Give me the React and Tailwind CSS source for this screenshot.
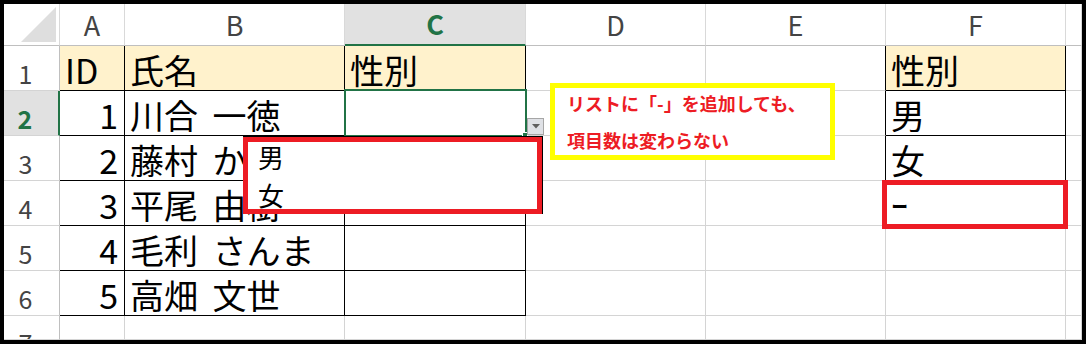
import React from "react";

const cols = ["A", "B", "C", "D", "E", "F", ""];

const rows = [
  ["ID", "氏名", "性別", "", "", "性別", ""],
  ["1", "川合 一徳", "", "", "", "男", ""],
  ["2", "藤村 かおり", "", "", "", "女", ""],
  ["3", "平尾 由樹", "", "", "", "ｰ", ""],
  ["4", "毛利 さんま", "", "", "", "", ""],
  ["5", "高畑 文世", "", "", "", "", ""],
  ["", "", "", "", "", "", ""],
];

const jp = "font-['Noto_Sans_CJK_JP','Noto_Sans',sans-serif]";

function inTable(r, c) {
  return r >= 1 && r <= 6 && c <= 2;
}

function Cell({ r, c, value }) {
  const table = inTable(r, c);
  const fTable = c === 5 && r >= 1 && r <= 3;
  const rightBlack = table || fTable || (c === 4 && r >= 1 && r <= 3);
  const bottomBlack = table || fTable;
  const gold = r === 1 && (c <= 2 || c === 5);
  const numeric = c === 0 && r >= 2;

  return (
    <div
      className={`flex whitespace-nowrap border-r border-b ${
        rightBlack ? "border-r-black" : "border-r-[#d4d4d4]"
      } ${bottomBlack ? "border-b-black" : "border-b-[#d4d4d4]"} ${
        gold ? "bg-[#fff2cc]" : "bg-white"
      } ${numeric ? "justify-end pr-[6px]" : "justify-start pl-[5px]"} items-end`}
    >
      {value && (
        <span className="text-[34px] leading-[40px] text-black [word-spacing:7px]">{value}</span>
      )}
    </div>
  );
}

function CornerCell() {
  return (
    <div className="flex items-end justify-end border-r border-b border-r-[#d9d9d9] border-b-[#bfbfbf] bg-white pr-[2px] pb-[2px]">
      <svg width="36" height="36" viewBox="0 0 36 36">
        <polygon points="35,0 35,35 0,35" fill="#dedede" />
      </svg>
    </div>
  );
}

function ColHeader({ label, active }) {
  return (
    <div
      className={`flex items-center justify-center border-r border-r-[#d9d9d9] ${
        active
          ? "border-b-2 border-b-[#217346] bg-[#e1e1e1] font-bold text-[#217346]"
          : "border-b border-b-[#bfbfbf] bg-white text-[#444444]"
      }`}
    >
      <span className="text-[27px] leading-[32px]">{label}</span>
    </div>
  );
}

function RowHeader({ n, active }) {
  return (
    <div
      className={`flex justify-center overflow-hidden border-b border-b-[#d4d4d4] pr-3 ${
        active
          ? "border-r-2 border-r-[#217346] bg-[#e1e1e1] font-bold text-[#217346]"
          : "border-r border-r-[#bfbfbf] bg-white text-[#444444]"
      } ${n === 7 ? "items-start pt-[11px]" : "items-end pb-[1px]"}`}
    >
      <span className="text-[25px] leading-[31px]">{n}</span>
    </div>
  );
}

export default function App() {
  return (
    <div className={`h-[344px] w-[1086px] overflow-hidden border-4 border-black bg-white ${jp}`}>
      <div className="relative h-full w-full">
        {/* Sheet grid */}
        <div className="grid h-full w-full grid-cols-[56px_65px_220px_181px_180px_180px_180px_16px] grid-rows-[42px_repeat(6,45px)_24px]">
          <CornerCell />
          {cols.map((c, i) => (
            <ColHeader key={i} label={c} active={c === "C"} />
          ))}
          {rows.map((row, i) => (
            <React.Fragment key={i}>
              <RowHeader n={i + 1} active={i === 1} />
              {row.map((v, j) => (
                <Cell key={j} r={i + 1} c={j} value={v} />
              ))}
            </React.Fragment>
          ))}
        </div>

        {/* Active cell C2 */}
        <div className="absolute left-[340px] top-[85px] h-[48px] w-[183px] border-2 border-[#217346]" />
        <div className="absolute left-[518px] top-[128px] h-[6px] w-[6px] border border-white bg-[#217346]" />

        {/* Dropdown button */}
        <div className="absolute left-[523px] top-[114px] flex h-[17px] w-[17px] items-center justify-center border border-[#a6a6a6] bg-[#dfe1e6]">
          <svg width="8" height="5" viewBox="0 0 8 5">
            <polygon points="0,0 8,0 4,4.5" fill="#5f5f5f" />
          </svg>
        </div>

        {/* Dropdown list */}
        <div className="absolute left-[239px] top-[132px] flex h-[78px] w-[300px] flex-col border border-black bg-white pl-[14px]">
          <div className="text-[26px] leading-[40px] text-black">男</div>
          <div className="text-[26px] leading-[36px] text-black">女</div>
        </div>
        <div className="absolute left-[239px] top-[133px] h-[77px] w-[299px] border-[5px] border-[#ed1c24]" />

        {/* Callout */}
        <div className="absolute left-[546px] top-[79px] flex h-[77px] w-[285px] flex-col gap-[19px] border-[5px] border-[#ffff00] bg-white pl-[12px] pt-[6px] font-bold text-[#ed1c24]">
          <div className="text-[18px] leading-[18px]">リストに「-」を追加しても、</div>
          <div className="text-[18px] leading-[18px]">項目数は変わらない</div>
        </div>

        {/* Highlight on F4 */}
        <div className="absolute left-[878px] top-[176px] h-[49px] w-[186px] border-[5px] border-[#ed1c24]" />
      </div>
    </div>
  );
}
